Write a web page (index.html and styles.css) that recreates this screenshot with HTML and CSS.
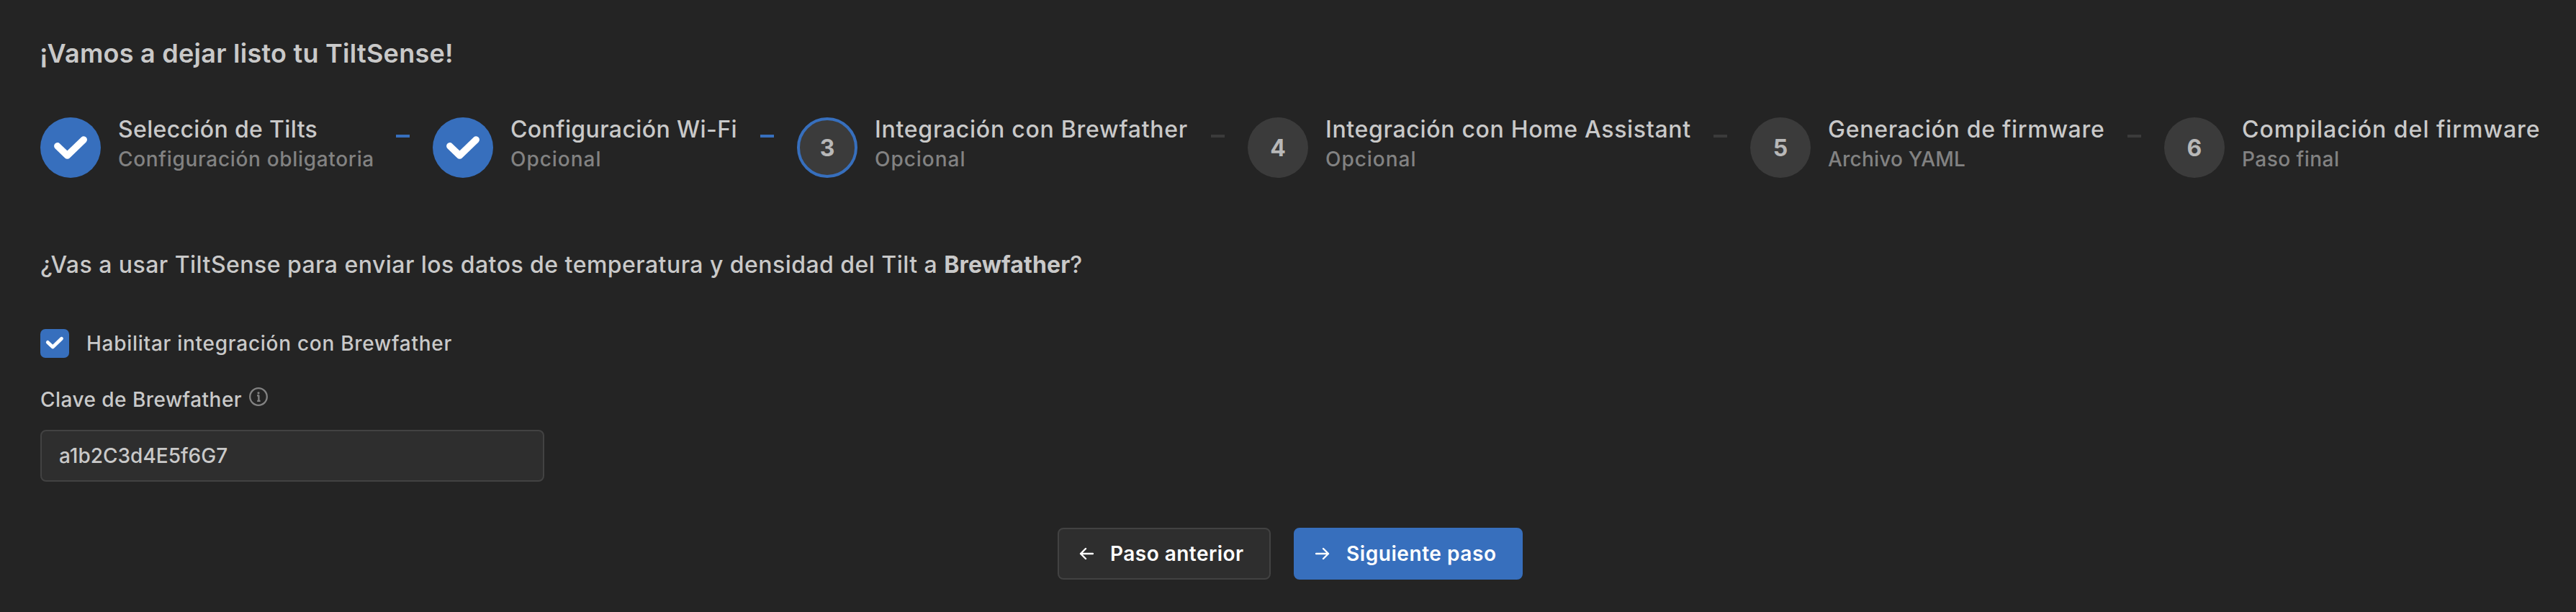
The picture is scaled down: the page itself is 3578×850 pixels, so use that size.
FILE: index.html
```
<!DOCTYPE html>
<html lang="es">
<head>
<meta charset="utf-8">
<title>TiltSense</title>
<link rel="stylesheet" href="styles.css">
</head>
<body>
<main class="wizard">
  <h1 class="title">¡Vamos a dejar listo tu TiltSense!</h1>

  <ol class="stepper">
    <li class="step">
      <span class="badge done"><svg viewBox="0 0 84 84"><path d="M23.8 39.8L37.5 53L60.3 31"/></svg></span>
      <div class="body"><div class="name s1">Selección de Tilts</div><div class="desc">Configuración obligatoria</div></div>
      <span class="dash active"></span>
    </li>
    <li class="step">
      <span class="badge done"><svg viewBox="0 0 84 84"><path d="M23.8 39.8L37.5 53L60.3 31"/></svg></span>
      <div class="body"><div class="name s2">Configuración Wi-Fi</div><div class="desc optional">Opcional</div></div>
      <span class="dash active"></span>
    </li>
    <li class="step">
      <span class="badge current">3</span>
      <div class="body"><div class="name s3">Integración con Brewfather</div><div class="desc optional">Opcional</div></div>
      <span class="dash"></span>
    </li>
    <li class="step">
      <span class="badge">4</span>
      <div class="body"><div class="name s4">Integración con Home Assistant</div><div class="desc optional">Opcional</div></div>
      <span class="dash"></span>
    </li>
    <li class="step">
      <span class="badge">5</span>
      <div class="body"><div class="name s5">Generación de firmware</div><div class="desc s5d">Archivo YAML</div></div>
      <span class="dash"></span>
    </li>
    <li class="step">
      <span class="badge">6</span>
      <div class="body"><div class="name s6">Compilación del firmware</div><div class="desc s6d">Paso final</div></div>
    </li>
  </ol>

  <p class="question">¿Vas a usar TiltSense para enviar los datos de temperatura y densidad del Tilt a <strong>Brewfather</strong>?</p>

  <div class="check-row">
    <span class="checkbox"><svg viewBox="0 0 40 40"><path d="M10.3 18.4L17.3 25L29.5 13.2"/></svg></span>
    <span class="check-label">Habilitar integración con Brewfather</span>
  </div>

  <div class="field-label">
    <span>Clave de Brewfather</span>
    <svg class="info" viewBox="0 0 26 26"><circle cx="13" cy="13" r="11.8"/><path d="M11 11.4H13.4V18.2M11.2 18.8H15.6"/><circle class="dot" cx="13" cy="7.8" r="1.6"/></svg>
  </div>
  <div class="input">a1b2C3d4E5f6G7</div>

  <div class="actions">
    <button class="btn prev"><svg class="arrow" viewBox="0 0 20 18"><path d="M19 9H2M9 2L2 9L9 16"/></svg><span>Paso anterior</span></button>
    <button class="btn next"><svg class="arrow" viewBox="0 0 20 18"><path d="M1 9H18M11 2L18 9L11 16"/></svg><span>Siguiente paso</span></button>
  </div>
</main>
</body>
</html>
```
FILE: styles.css
```
* { box-sizing: border-box; }
body {
  margin: 0;
  background: #242424;
  color: #c9c9c9;
  font-family: Inter, "Open Sans", sans-serif;
  font-weight: 500;
}
svg { display: block; fill: none; stroke-linecap: round; stroke-linejoin: round; }
.wizard { height: 850px; padding: 52px 50px 0 56px; overflow: hidden; white-space: nowrap; }
.title { margin: 0 0 67px -1px; font-size: 36px; line-height: 44px; font-weight: 600; letter-spacing: 0.25px; }

.stepper {
  display: grid;
  grid-template-columns: 545px 506px 626px 698px 575px 1fr;
  height: 84px;
  margin: 0 0 101px;
  padding: 0;
  list-style: none;
}
.step { display: flex; align-items: flex-start; }
.badge {
  display: flex;
  align-items: center;
  justify-content: center;
  flex: none;
  width: 84px;
  height: 84px;
  border-radius: 50%;
  background: #3b3b3b;
  color: #b8b8b8;
  font-size: 32px;
  font-weight: 700;
}
.badge.done { background: #376fbd; }
.badge.current { border: 4px solid #376fbd; }
.badge svg { width: 84px; height: 84px; stroke: #fff; stroke-width: 9.4; }
.body { margin: -2px 0 0 24px; }
.name { margin-bottom: 5px; font-size: 32px; line-height: 38px; }
.desc { font-size: 28px; line-height: 34px; letter-spacing: 0.67px; color: #828282; }
.s1 { letter-spacing: 0.35px; }
.s2 { letter-spacing: 0.4px; }
.s3 { letter-spacing: 0.75px; }
.s4 { letter-spacing: 0.68px; }
.s5 { letter-spacing: 0.72px; }
.s6 { letter-spacing: 0.99px; }
.optional { letter-spacing: 0.97px; }
.s5d { letter-spacing: 0.19px; }
.s6d { letter-spacing: 0.47px; }
.dash { width: 19px; height: 4px; margin: 24px 32px 0 auto; background: #3b3b3b; }
.dash.active { background: #376fbd; }

.question { margin: 0 0 69px; font-size: 32px; line-height: 40px; letter-spacing: 0.46px; }
.question strong { font-weight: 700; letter-spacing: 0.14px; }

.check-row { display: flex; align-items: center; gap: 24px; height: 40px; margin-bottom: 41px; font-size: 28px; }
.checkbox { width: 40px; height: 40px; border-radius: 7px; background: #376fbd; }
.checkbox svg { width: 40px; height: 40px; stroke: #fff; stroke-width: 4.8; }
.check-label { letter-spacing: 0.72px; }

.field-label { display: flex; gap: 10px; height: 34px; margin-bottom: 25px; font-size: 28px; line-height: 34px; letter-spacing: 0.46px; }
.info { width: 26px; height: 26px; stroke: #828282; stroke-width: 2.3; stroke-linecap: butt; }
.info .dot { fill: #828282; stroke: none; }
.input {
  width: 700px;
  height: 72px;
  padding: 0 24px;
  border: 2px solid #424242;
  border-radius: 8px;
  background: #2e2e2e;
  font-size: 28px;
  line-height: 68px;
}

.actions { display: flex; justify-content: center; gap: 32px; margin-top: 64px; }
.btn {
  display: flex;
  align-items: center;
  gap: 23px;
  height: 72px;
  padding: 0 0 0 28px;
  border: 2px solid #424242;
  border-radius: 8px;
  background: #2e2e2e;
  color: #fff;
  font: 600 28px Inter, "Open Sans", sans-serif;
}
.prev { width: 296px; letter-spacing: 0.46px; }
.next { width: 318px; letter-spacing: 0.56px; border-color: #376fbd; background: #376fbd; }
.arrow { width: 20px; height: 18px; stroke: #fff; stroke-width: 2.4; }
```
